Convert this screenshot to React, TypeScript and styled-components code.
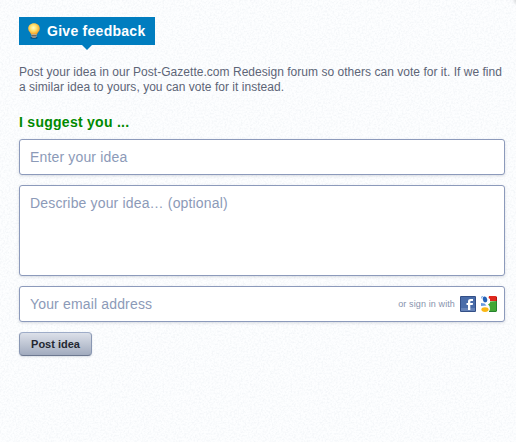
import React from "react";
import styled, { createGlobalStyle } from "styled-components";

const grain =
  "url(\"data:image/svg+xml,%3Csvg xmlns='http://www.w3.org/2000/svg' width='128' height='128'%3E%3Cfilter id='n' x='0' y='0' width='1' height='1'%3E%3CfeTurbulence type='fractalNoise' baseFrequency='.55' numOctaves='3' stitchTiles='stitch'/%3E%3CfeColorMatrix values='0 0 0 0 .68 0 0 0 0 .73 0 0 0 0 .78 .6 0 0 0 -.24'/%3E%3C/filter%3E%3Crect width='128' height='128' filter='url(%23n)'/%3E%3C/svg%3E\")";

const GlobalStyle = createGlobalStyle`
  * { box-sizing: border-box; }
  body {
    margin: 0;
    overflow: hidden;
    background: #fdfeff;
    font-family: "Liberation Sans", Arial, sans-serif;
  }
`;

const Page = styled.main`
  display: flex;
  flex-direction: column;
  align-items: flex-start;
  height: 442px;
  width: 516px;
  padding: 17px 11px 0 19px;
  background:
    radial-gradient(circle at 518px 0, #c5c7c9 0, rgba(210, 212, 214, 0.6) 3px, transparent 6px),
    ${grain},
    #fdfeff;
`;

const Tab = styled.h1`
  position: relative;
  display: flex;
  align-items: center;
  gap: 6px;
  width: 136px;
  height: 28px;
  margin: 0;
  padding-left: 8px;
  background: #007dbf;
  color: #fff;
  font-size: 14px;
  line-height: 28px;
  letter-spacing: 0.27px;
  white-space: nowrap;

  &::after {
    content: "";
    position: absolute;
    top: 100%;
    left: 63px;
    border: 5px solid transparent;
    border-top-color: #007dbf;
    border-bottom: 0;
  }
`;

const Intro = styled.p`
  margin: 20px 0 0;
  color: #5d6577;
  font-size: 12px;
  line-height: 15px;
  letter-spacing: 0.03px;
  white-space: nowrap;
`;

const Heading = styled.h2`
  margin: 18px 0 0;
  color: #008a00;
  font-size: 14px;
  line-height: 18px;
  letter-spacing: 0.27px;
`;

const Form = styled.form`
  display: flex;
  flex-direction: column;
  align-items: flex-start;
  gap: 10px;
  width: 100%;
  margin-top: 8px;
`;

const Field = styled.label<{ $height: number }>`
  display: flex;
  align-items: center;
  width: 100%;
  height: ${(p) => p.$height}px;
  padding: 0 7px 0 10px;
  border: 1px solid #8c9abb;
  border-radius: 3px;
  background: #fff;
  box-shadow: 0 1px 3px rgba(80, 95, 125, 0.22);

  input,
  textarea {
    flex: 1;
    min-width: 0;
    height: 100%;
    padding: 0;
    border: 0;
    outline: 0;
    background: transparent;
    color: #5d6577;
    font: 14px/18px "Liberation Sans", Arial, sans-serif;
    letter-spacing: 0.16px;
  }
  textarea {
    padding-top: 8px;
    resize: none;
  }
  input::placeholder,
  textarea::placeholder {
    color: #8c9ab8;
    opacity: 1;
  }
`;

const SignIn = styled.span`
  display: flex;
  align-items: center;
  gap: 5px;
  color: #8793ad;
  font-size: 9px;
  letter-spacing: 0.12px;
  white-space: nowrap;
`;

const PostButton = styled.button`
  width: 73px;
  height: 24px;
  padding: 0;
  border: 1px solid #8997b3;
  border-top-color: #9eacc8;
  border-bottom-color: #6c7890;
  border-radius: 4px;
  background: linear-gradient(#dce0e9, #a1abbe);
  box-shadow: 0 1px 2px rgba(80, 95, 125, 0.2);
  color: #242832;
  font: bold 11px/20px "Liberation Sans", Arial, sans-serif;
`;

const Bulb = () => (
  <svg width="14" height="16" viewBox="0 0 14 16">
    <defs>
      <radialGradient id="glass" cx=".45" cy=".4" r=".6">
        <stop offset="0" stopColor="#fffbc7" />
        <stop offset=".45" stopColor="#ffe16b" />
        <stop offset="1" stopColor="#f39a1f" />
      </radialGradient>
    </defs>
    <ellipse cx="7" cy="14.7" rx="3.7" ry="1.2" fill="#003e6b" opacity=".6" />
    <path d="M7 .3C3.6.3 1.2 2.7 1.2 5.7c0 2.6 2.5 3.7 3 6h5.6c.5-2.3 3-3.4 3-6C12.8 2.7 10.4.3 7 .3Z" fill="url(#glass)" />
    <path d="M4.5 11.3h5v2.5L8.3 15H5.700l-1.200-1.200Z" fill="#b9b9b2" />
    <path d="M4.500 12.500h5M5 14h4" stroke="#55534b" strokeWidth=".8" />
  </svg>
);

const Facebook = () => (
  <svg width="16" height="16" viewBox="0 0 16 16">
    <rect width="16" height="16" rx="1" fill="#334f87" />
    <rect x="1" y="1" width="14" height="14" fill="#496ca9" />
    <path d="M1 12h14v3H1Z" fill="#6482b8" />
    <path d="M8 14V9H6.500V7H8V5.500C8 3.800 9 3 10.600 3H13v2h-1.500C10.600 5 10.300 5.300 10.300 6v1H13l-.3 2h-2.400v5Z" fill="#fff" />
  </svg>
);

const Google = () => (
  <svg width="16" height="16" viewBox="0 0 16 16">
    <defs>
      <clipPath id="tile"><rect width="16" height="16" rx="1.500" /></clipPath>
    </defs>
    <g clipPath="url(#tile)">
      <rect width="16" height="16" fill="#fff" />
      <path d="M8 0h8v5H9V3L7.500 2Z" fill="#df281e" />
      <path d="M9 5.500 16 5v11H8l1-3-.5-3L7 8.500 9 7Z" fill="#43a736" />
      <path d="M0 0h2.500L0 3Z" fill="#85afe6" />
      <path d="M0 7 3.500 7.500 5.500 9.500 0 10Z" fill="#6699df" />
      <ellipse cx="4" cy="3.400" rx="2.200" ry="3" fill="#2463b8" transform="rotate(-12 4 3.400)" />
      <ellipse cx="4" cy="13.600" rx="3.600" ry="2.300" fill="#fbb714" />
    </g>
    <path d="M15.500 1v4" stroke="#b31513" />
    <path d="M15.500 5v10M8 15.500h7" stroke="#278330" />
  </svg>
);

export default function App() {
  return (
    <>
      <GlobalStyle />
      <Page>
        <Tab><Bulb />Give feedback</Tab>
        <Intro>
          Post your idea in our Post-Gazette.com Redesign forum so others can vote for it. If we find
          <br />
          a similar idea to yours, you can vote for it instead.
        </Intro>
        <Heading>I suggest you ...</Heading>
        <Form onSubmit={(e) => e.preventDefault()}>
          <Field $height={36}><input placeholder="Enter your idea" /></Field>
          <Field $height={91}><textarea placeholder="Describe your idea… (optional)" /></Field>
          <Field $height={36}>
            <input type="email" placeholder="Your email address" />
            <SignIn>or sign in with <Facebook /><Google /></SignIn>
          </Field>
          <PostButton>Post idea</PostButton>
        </Form>
      </Page>
    </>
  );
}
